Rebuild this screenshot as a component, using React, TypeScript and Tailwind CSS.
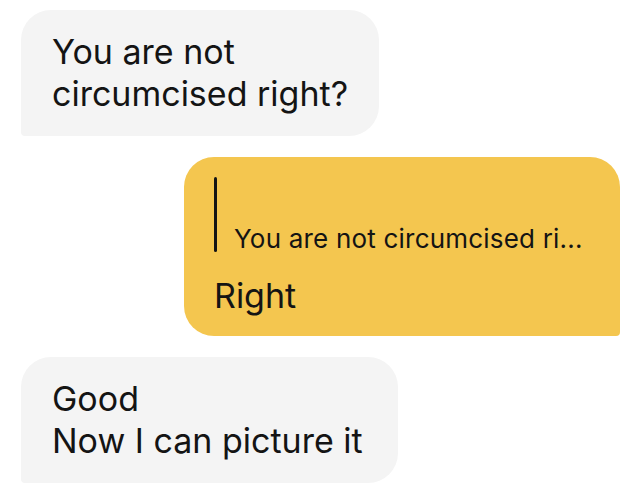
export default function App() {
  return (
    <div
      className="flex h-[496px] w-[640px] flex-col gap-[21px] overflow-hidden bg-white pl-[21px] pr-[20px] pt-[10px] text-[#141414]"
      style={{ fontFamily: "Inter, 'Noto Sans', sans-serif" }}
    >
      <div className="flex h-[126px] w-[358px] flex-col justify-center rounded-[30px] rounded-bl-[4px] bg-[#f4f4f4] pl-[31px] text-[34px] leading-[42px]">
        <p>You are not</p>
        <p>circumcised right?</p>
      </div>

      <div className="flex h-[179px] w-[436px] flex-col self-end rounded-[30px] rounded-br-[4px] bg-[#f4c64f] pl-[30px] pt-[20px]">
        <div className="flex items-end gap-[17px]">
          <div className="h-[75px] w-[3px] rounded-full bg-[#141414]" />
          <p className="-mb-[2px] text-[26px] leading-[30px] tracking-[0.2px]">You are not circumcised ri...</p>
        </div>
        <p className="mt-[23px] text-[34px] leading-[42px]">Right</p>
      </div>

      <div className="flex h-[126px] w-[377px] flex-col justify-center rounded-[30px] rounded-bl-[4px] bg-[#f4f4f4] pl-[31px] text-[34px] leading-[42px]">
        <p>Good</p>
        <p>Now I can picture it</p>
      </div>
    </div>
  );
}
